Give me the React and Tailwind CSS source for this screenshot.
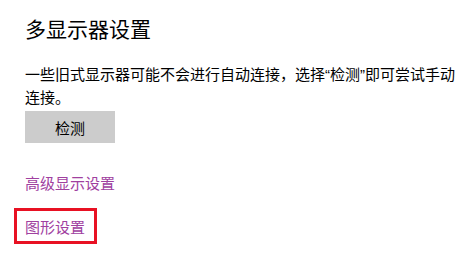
export default function App() {
  const q = { fontFamily: '"Liberation Sans", sans-serif' };
  return (
    <div className="w-[468px] h-[265px] bg-white overflow-hidden pl-[25px] pt-[14px]" style={{ fontFamily: '"Noto Sans CJK SC", "Noto Sans", sans-serif' }}>
      <div className="text-[21px] leading-[28px] text-black">多显示器设置</div>
      <div className="mt-[21px] w-[442px] text-[15px] leading-[22px] text-black">
        一些旧式显示器可能不会进行自动连接，选择<span style={q}>“</span>检测<span style={q}>”</span>即可尝试手动连接。
      </div>
      <button className="mt-[3px] w-[90px] h-[32px] bg-[#cccccc] text-[15px] leading-[21px] text-black flex items-center justify-center">检测</button>
      <div className="mt-[29px] text-[15px] leading-[21px] text-[#a0409f]">高级显示设置</div>
      <div className="mt-[15px] -ml-[11px] w-[83px] h-[36px] border-[3px] border-[#e81123] flex items-center pl-[8px] text-[15px] leading-[21px] text-[#a0409f]">图形设置</div>
    </div>
  );
}
